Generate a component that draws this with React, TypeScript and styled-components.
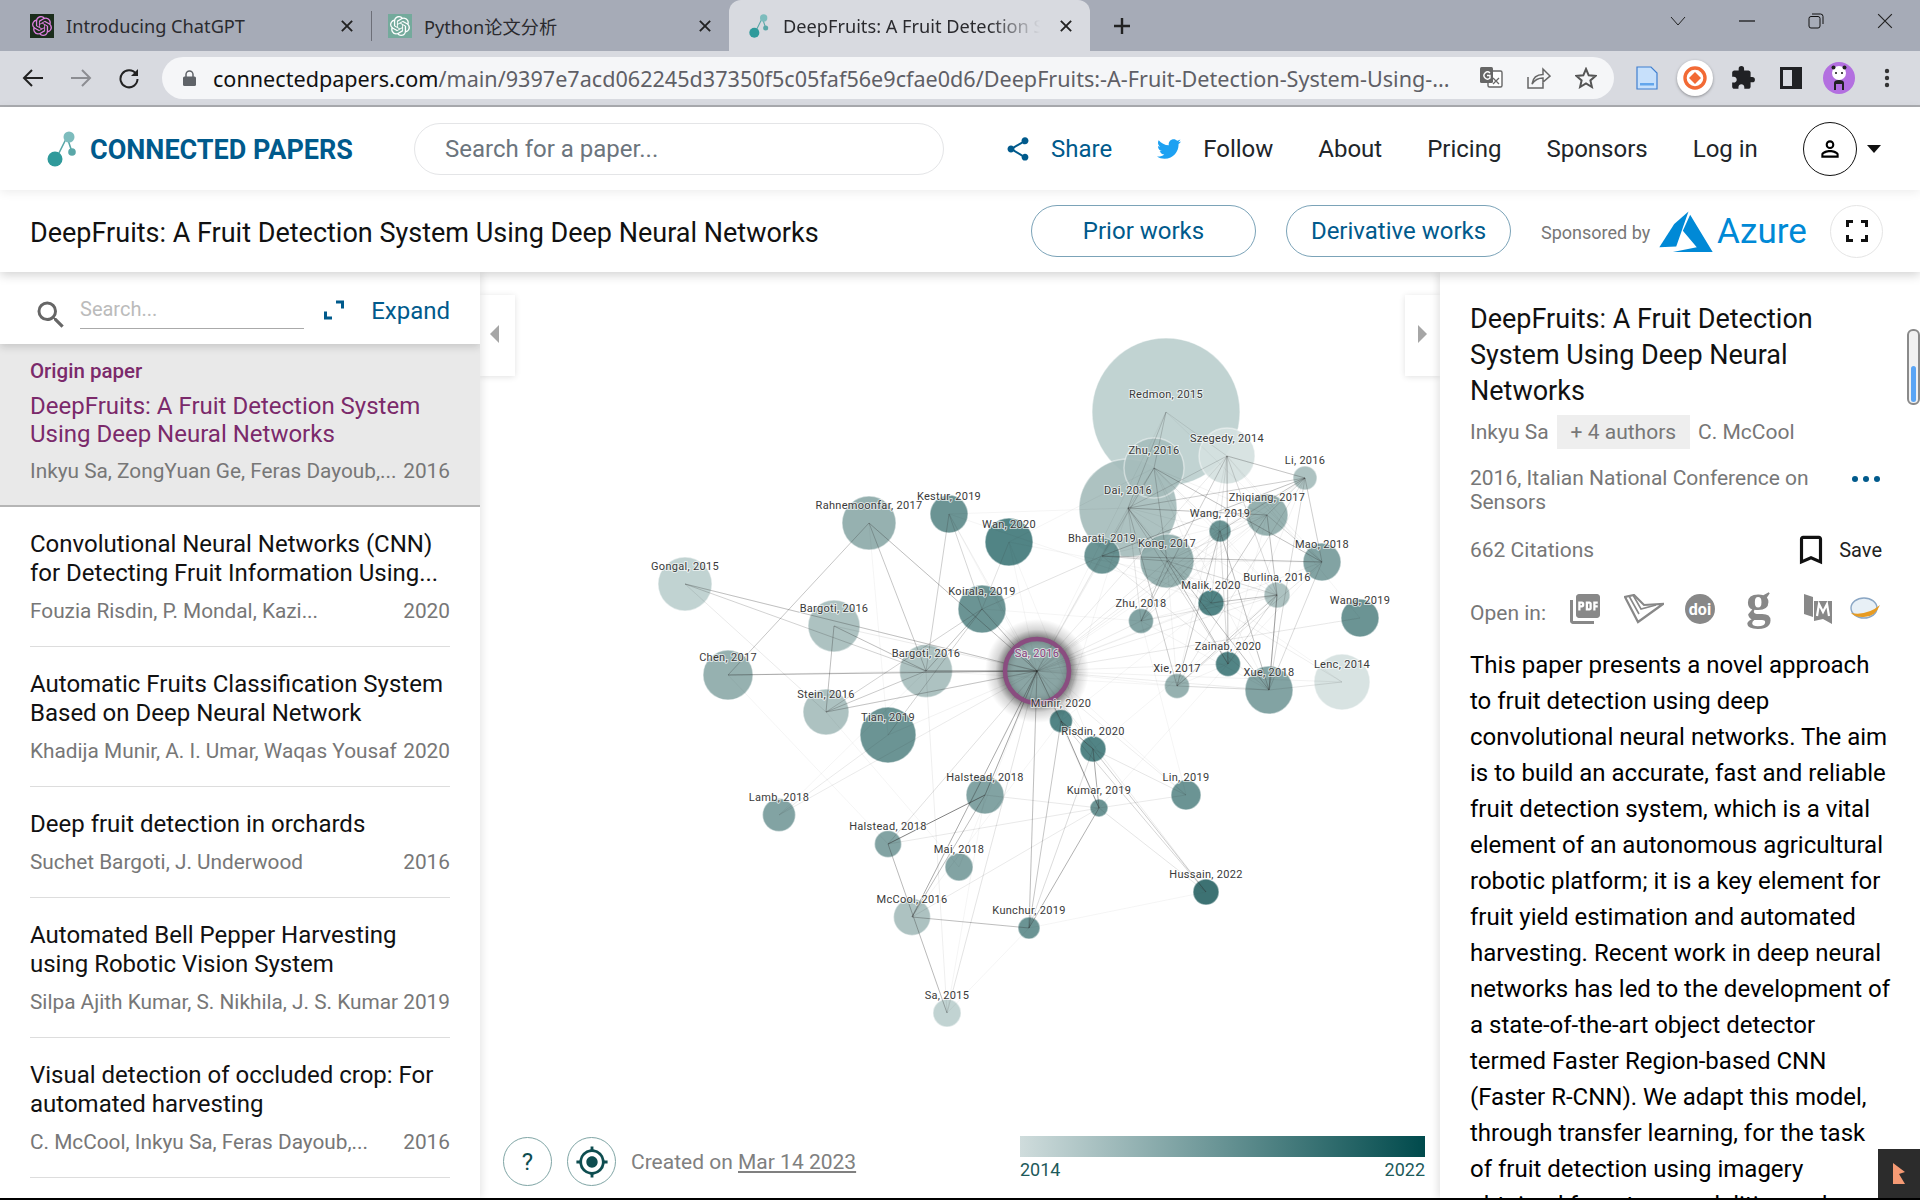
import { createGlobalStyle, styled } from 'styled-components'
import {
	MdBookmarkBorder,
	MdExtension,
	MdGpsFixed,
	MdPersonOutline,
	MdPictureAsPdf,
	MdSearch,
	MdShare,
} from 'react-icons/md'
import { FaTwitter } from 'react-icons/fa'
import { SiOpenai } from 'react-icons/si'

const GlobalStyle = createGlobalStyle`
	html, body {
		margin: 0;
		background: #000;
		font-family: Roboto, 'Liberation Sans', sans-serif;
	}
`

const YEAR_COLORS: Record<string, string> = {
	'2014': '#d5e1df',
	'2015': '#bccfce',
	'2016': '#a6bdbc',
	'2017': '#8daaa9',
	'2018': '#779b9b',
	'2019': '#5e8b8b',
	'2020': '#427a7b',
	'2022': '#2c6667',
}

type GraphNode = { id: string; label: string; x: number; y: number; r: number }

const node = (id: string, label: string, x: number, y: number, r: number): GraphNode => ({
	id,
	label,
	x,
	y,
	r,
})

const NODES: GraphNode[] = [
	node('redmon', 'Redmon, 2015', 1166, 412, 74),
	node('dai', 'Dai, 2016', 1128, 508, 49),
	node('zhu16', 'Zhu, 2016', 1154, 468, 30),
	node('szegedy', 'Szegedy, 2014', 1227, 456, 28),
	node('li', 'Li, 2016', 1305, 478, 12),
	node('zhiqiang', 'Zhiqiang, 2017', 1267, 515, 21),
	node('wangA', 'Wang, 2019', 1220, 531, 11),
	node('bharati', 'Bharati, 2019', 1102, 556, 18),
	node('kong', 'Kong, 2017', 1167, 561, 27),
	node('mao', 'Mao, 2018', 1322, 562, 19),
	node('malik', 'Malik, 2020', 1211, 603, 13),
	node('burlina', 'Burlina, 2016', 1277, 595, 13),
	node('wangB', 'Wang, 2019', 1360, 618, 19),
	node('zhu18', 'Zhu, 2018', 1141, 621, 12.5),
	node('zainab', 'Zainab, 2020', 1228, 664, 12.5),
	node('xie', 'Xie, 2017', 1177, 686, 12.5),
	node('xue', 'Xue, 2018', 1269, 690, 24),
	node('lenc', 'Lenc, 2014', 1342, 682, 28),
	node('rahne', 'Rahnemoonfar, 2017', 869, 523, 27),
	node('kestur', 'Kestur, 2019', 949, 514, 19),
	node('wan', 'Wan, 2020', 1009, 542, 24),
	node('gongal', 'Gongal, 2015', 685, 584, 27),
	node('koirala', 'Koirala, 2019', 982, 609, 24),
	node('bargotiA', 'Bargoti, 2016', 834, 626, 26),
	node('bargotiB', 'Bargoti, 2016', 926, 671, 26.5),
	node('chen', 'Chen, 2017', 728, 675, 25),
	node('stein', 'Stein, 2016', 826, 712, 23),
	node('tian', 'Tian, 2019', 888, 735, 28),
	node('munir', 'Munir, 2020', 1061, 721, 11.5),
	node('risdin', 'Risdin, 2020', 1093, 749, 13),
	node('halsteadA', 'Halstead, 2018', 985, 795, 19),
	node('lin', 'Lin, 2019', 1186, 795, 15),
	node('kumar', 'Kumar, 2019', 1099, 808, 9),
	node('lamb', 'Lamb, 2018', 779, 815, 16.5),
	node('halsteadB', 'Halstead, 2018', 888, 844, 13.5),
	node('mai', 'Mai, 2018', 959, 867, 14),
	node('hussain', 'Hussain, 2022', 1206, 892, 13),
	node('mccool', 'McCool, 2016', 912, 917, 18.5),
	node('kunchur', 'Kunchur, 2019', 1029, 928, 11),
	node('sa15', 'Sa, 2015', 947, 1013, 14),
]

const ORIGIN = { x: 1037, y: 671 }

// the edges you can actually make out in the graph
const STRONG_EDGES: [string, string, number][] = [
	['gongal', 'origin', 0.24],
	['gongal', 'bargotiB', 0.22],
	['gongal', 'stein', 0.1],
	['rahne', 'chen', 0.28],
	['rahne', 'bargotiB', 0.28],
	['rahne', 'origin', 0.24],
	['kestur', 'bargotiB', 0.24],
	['kestur', 'koirala', 0.2],
	['chen', 'origin', 0.34],
	['chen', 'bargotiB', 0.08],
	['bargotiA', 'stein', 0.32],
	['bargotiA', 'bargotiB', 0.32],
	['bargotiB', 'origin', 0.5],
	['koirala', 'bargotiB', 0.3],
	['koirala', 'stein', 0.22],
	['koirala', 'origin', 0.26],
	['stein', 'bargotiB', 0.26],
	['stein', 'origin', 0.22],
	['tian', 'koirala', 0.22],
	['wan', 'koirala', 0.14],
	['koirala', 'bharati', 0.14],
	['origin', 'halsteadA', 0.4],
	['origin', 'mccool', 0.36],
	['origin', 'munir', 0.32],
	['origin', 'kunchur', 0.24],
	['munir', 'kunchur', 0.28],
	['risdin', 'kunchur', 0.13],
	['kumar', 'kunchur', 0.38],
	['munir', 'kumar', 0.5],
	['risdin', 'kumar', 0.42],
	['munir', 'risdin', 0.5],
	['halsteadA', 'halsteadB', 0.62],
	['halsteadA', 'mccool', 0.32],
	['halsteadB', 'sa15', 0.34],
	['risdin', 'hussain', 0.24],
	['munir', 'hussain', 0.2],
	['kumar', 'hussain', 0.13],
	['kunchur', 'mccool', 0.32],
	['kumar', 'lin', 0.1],
	['kumar', 'halsteadA', 0.11],
	['kumar', 'halsteadB', 0.11],
	['kumar', 'mccool', 0.1],
	['kunchur', 'hussain', 0.05],
	['risdin', 'lin', 0.12],
	['tian', 'lamb', 0.1],
	['sa15', 'kunchur', 0.05],
	['sa15', 'bargotiB', 0.08],
	['sa15', 'origin', 0.06],
	['halsteadB', 'origin', 0.08],
	['li', 'mao', 0.24],
	['szegedy', 'li', 0.24],
	['redmon', 'dai', 0.22],
	['redmon', 'zhu16', 0.22],
	['redmon', 'szegedy', 0.12],
	['wangB', 'origin', 0.05],
	['lenc', 'malik', 0.08],
	['lenc', 'xue', 0.12],
	['burlina', 'xue', 0.24],
]

const CLUSTER = [
	'dai', 'zhu16', 'szegedy', 'li', 'zhiqiang', 'wangA', 'bharati', 'kong',
	'mao', 'malik', 'burlina', 'zhu18', 'zainab', 'xie', 'xue',
]

const position = (id: string) =>
	id === 'origin' ? ORIGIN : (NODES.find((n) => n.id === id) as GraphNode)

// fills the dense right cluster and the faint web without listing every pair
function buildEdges() {
	const edges: { a: string; b: string; o: number }[] = STRONG_EDGES.map(([a, b, o]) => ({ a, b, o }))
	CLUSTER.forEach((a, i) => {
		CLUSTER.slice(i + 1).forEach((b, j) => {
			const h = (i * 37 + j * 61 + 11) % 10
			if (h < 6) edges.push({ a, b, o: 0.06 + (h % 5) * 0.06 })
		})
	})
	NODES.forEach((n, i) => {
		edges.push({ a: n.id, b: 'origin', o: 0.05 + ((i * 13) % 5) * 0.012 })
		NODES.forEach((m, j) => {
			if (j > i && (i * 7 + j * 11) % 9 === 0) {
				const d = Math.hypot(n.x - m.x, n.y - m.y)
				if (d < 280) edges.push({ a: n.id, b: m.id, o: 0.05 })
			}
		})
	})
	return edges
}

const EDGES = buildEdges()

const PAPERS = [
	{
		title: 'Convolutional Neural Networks (CNN) for Detecting Fruit Information Using...',
		authors: 'Fouzia Risdin, P. Mondal, Kazi...',
		year: 2020,
	},
	{
		title: 'Automatic Fruits Classification System Based on Deep Neural Network',
		authors: 'Khadija Munir, A. I. Umar, Waqas Yousaf',
		year: 2020,
	},
	{
		title: 'Deep fruit detection in orchards',
		authors: 'Suchet Bargoti, J. Underwood',
		year: 2016,
	},
	{
		title: 'Automated Bell Pepper Harvesting using Robotic Vision System',
		authors: 'Silpa Ajith Kumar, S. Nikhila, J. S. Kumar',
		year: 2019,
	},
	{
		title: 'Visual detection of occluded crop: For automated harvesting',
		authors: 'C. McCool, Inkyu Sa, Feras Dayoub,...',
		year: 2016,
	},
]

const ABSTRACT_HEAD =
	'This paper presents a novel approach to fruit detection using deep convolutional neural networks. The aim is to build an accurate, fast and reliable fruit detection system, which is a vital element of an autonomous agricultural robotic platform; it is a key element for fruit yield estimation and automated harvesting. Recent work in deep neural networks has led to the development of a state-of-the-art object detector termed Faster Region-based CNN (Faster R-CNN). We adapt this model, through transfer learning, for the task'
const ABSTRACT_TAIL =
	'of fruit detection using imagery obtained from two modalities: colour (RGB) and Near-Infrared (NIR).'

function LogoMark({ size }: { size: number }) {
	return (
		<svg width={size} height={size * 1.2} viewBox="0 0 30 36">
			<path d="M9 28 L20 6 L25 21" stroke="#5aa7a8" strokeWidth="1.6" fill="none" />
			<circle cx="22" cy="6" r="5.5" fill="#7dbcbd" />
			<circle cx="25" cy="21" r="3.8" fill="#5aa7a8" />
			<circle cx="8" cy="28" r="7.5" fill="#2f9a9b" />
		</svg>
	)
}

function CloseGlyph({ size = 14, color = '#222', width = 2 }: { size?: number; color?: string; width?: number }) {
	return (
		<svg width={size} height={size} viewBox="0 0 14 14">
			<path d="M1 1 L13 13 M13 1 L1 13" stroke={color} strokeWidth={width} fill="none" />
		</svg>
	)
}

function Graph() {
	return (
		<GraphSvg viewBox="480 272 960 926">
			<defs>
				<radialGradient id="originFill">
					<stop offset="0%" stopColor="#8aa5a4" stopOpacity="0" />
					<stop offset="65%" stopColor="#8aa5a4" stopOpacity="0" />
					<stop offset="100%" stopColor="#4a4f4f" stopOpacity="0.45" />
				</radialGradient>
				<radialGradient id="originGlow">
					<stop offset="62%" stopColor="#000" stopOpacity="0.55" />
					<stop offset="80%" stopColor="#000" stopOpacity="0.16" />
					<stop offset="100%" stopColor="#000" stopOpacity="0" />
				</radialGradient>
			</defs>
			{NODES.map((n) => (
				<circle
					key={n.id + n.x}
					cx={n.x}
					cy={n.y}
					r={n.r}
					fill={YEAR_COLORS[n.label.slice(-4)]}
					fillOpacity={0.92}
					stroke="#fff"
					strokeOpacity={0.45}
					strokeWidth={1.5}
				/>
			))}
			<circle cx={ORIGIN.x} cy={ORIGIN.y} r={52} fill="url(#originGlow)" />
			<circle cx={ORIGIN.x} cy={ORIGIN.y} r={32} fill="#8aa5a4" />
			{EDGES.map((e, i) => {
				const a = position(e.a)
				const b = position(e.b)
				return <line key={i} x1={a.x} y1={a.y} x2={b.x} y2={b.y} stroke="#333" strokeOpacity={e.o} strokeWidth={1} />
			})}
			<circle cx={ORIGIN.x} cy={ORIGIN.y} r={32} fill="url(#originFill)" stroke="#8a4d80" strokeWidth={4.5} />
			{NODES.map((n) => (
				<NodeLabel key={n.id + 'label'} x={n.x} y={n.y - 14}>
					{n.label}
				</NodeLabel>
			))}
			<NodeLabel x={ORIGIN.x} y={ORIGIN.y - 14} $origin>
				Sa, 2016
			</NodeLabel>
		</GraphSvg>
	)
}

export default function App() {
	return (
		<>
			<GlobalStyle />
			<Page>
				<TabStrip>
					<Tab>
						<Favicon $bg="#1b2d1c" $fg="#de80e0">
							<SiOpenai size={20} />
						</Favicon>
						<TabTitle>Introducing ChatGPT</TabTitle>
						<CloseGlyph size={12} width={2.2} />
					</Tab>
					<TabDivider />
					<Tab>
						<Favicon $bg="#74aa9c" $fg="#fff">
							<SiOpenai size={20} />
						</Favicon>
						<TabTitle>Python论文分析</TabTitle>
						<CloseGlyph size={12} width={2.2} />
					</Tab>
					<ActiveTab>
						<LogoMark size={20} />
						<TabTitle $active>DeepFruits: A Fruit Detection System Using Deep Neural Networks</TabTitle>
						<CloseGlyph size={12} width={2.2} />
					</ActiveTab>
					<NewTab>
						<svg width="20" height="20" viewBox="0 0 20 20">
							<path d="M10 2 V18 M2 10 H18" stroke="#222" strokeWidth="2.4" />
						</svg>
					</NewTab>
					<WindowControls>
						<svg width="16" height="10" viewBox="0 0 16 10">
							<path d="M1 1 L8 9 L15 1" stroke="#222" fill="none" />
						</svg>
						<svg width="16" height="2" viewBox="0 0 16 2">
							<path d="M0 1 H16" stroke="#111" strokeWidth="1.2" />
						</svg>
						<svg width="16" height="16" viewBox="0 0 16 16">
							<rect x="1" y="3.5" width="11" height="11.5" rx="2" stroke="#111" fill="none" />
							<path d="M4 1 H12.5 Q15 1 15 3.5 V11" stroke="#111" fill="none" />
						</svg>
						<CloseGlyph size={16} width={1} />
					</WindowControls>
				</TabStrip>
				<Toolbar>
					<NavIcons>
						<svg width="22" height="20" viewBox="0 0 22 20">
							<path d="M21 10 H2 M10 2 L2 10 L10 18" stroke="#222" strokeWidth="2" fill="none" />
						</svg>
						<svg width="22" height="20" viewBox="0 0 22 20">
							<path d="M1 10 H20 M12 2 L20 10 L12 18" stroke="#8c8d92" strokeWidth="2" fill="none" />
						</svg>
						<svg width="22" height="22" viewBox="0 0 22 22">
							<path d="M18 7 A8.5 8.5 0 1 0 19.5 12" stroke="#222" strokeWidth="2" fill="none" />
							<path d="M20 2 V9 H13 Z" fill="#222" />
						</svg>
					</NavIcons>
					<AddressBar>
						<svg width="13" height="16" viewBox="0 0 13 16">
							<path d="M3 7 V4.5 A3.5 3.5 0 0 1 10 4.5 V7" stroke="#5f6368" strokeWidth="1.5" fill="none" />
							<rect y="6.5" width="13" height="9.5" rx="1.5" fill="#5f6368" />
						</svg>
						<Url>
							connectedpapers.com
							<UrlPath>/main/9397e7acd062245d37350f5c05faf56e9cfae0d6/DeepFruits:-A-Fruit-Detection-System-Using-...</UrlPath>
						</Url>
						<AddressActions>
							<svg width="24" height="24" viewBox="0 0 24 24">
								<rect x="9" y="5" width="14" height="16" rx="1.5" fill="#fff" stroke="#666" strokeWidth="1.4" />
								<rect x="1" y="1" width="13" height="16" rx="1.5" fill="#666" />
								<path d="M11 7 A3.5 3.5 0 1 0 11 12 V9.5 H8" stroke="#fff" strokeWidth="1.4" fill="none" />
								<path d="M14 12 L20 18 M20 12 L14 18" stroke="#666" strokeWidth="1.3" />
							</svg>
							<svg width="24" height="22" viewBox="0 0 24 22">
								<path d="M1 10 V21 H16 V16" stroke="#666" strokeWidth="1.5" fill="none" />
								<path d="M5 17 C6 10 10 7.5 16 7.5 V2 L23 9 L16 15 V11 C11 11 8 12.5 5 17 Z" stroke="#666" strokeWidth="1.5" fill="none" />
							</svg>
							<svg width="22" height="22" viewBox="0 0 22 22">
								<path d="M11 2 L13.7 8.3 L20.5 8.9 L15.4 13.4 L16.9 20 L11 16.5 L5.1 20 L6.6 13.4 L1.5 8.9 L8.3 8.3 Z" stroke="#555" strokeWidth="2" fill="none" />
							</svg>
						</AddressActions>
					</AddressBar>
					<Extensions>
						<svg width="22" height="24" viewBox="0 0 22 24">
							<path d="M1 1 H15 L21 7 V23 H1 Z" fill="#c7e0fb" stroke="#3f7fd0" strokeWidth="1.2" />
							<rect x="4" y="17" width="14" height="2.5" fill="#63a6ec" />
						</svg>
						<OrangeBadge>
							<svg width="24" height="24" viewBox="0 0 24 24">
								<circle cx="12" cy="12" r="10" stroke="#f26a35" strokeWidth="3.4" fill="#fff" />
								<path d="M12 6 L18 12 L12 18 L6 12 Z" fill="#f26a35" />
							</svg>
						</OrangeBadge>
						<MdExtension size={26} color="#202124" />
						<svg width="22" height="22" viewBox="0 0 22 22">
							<rect x="1.5" y="1.5" width="19" height="19" fill="none" stroke="#202124" strokeWidth="3" />
							<rect x="12" y="2" width="8" height="18" fill="#202124" />
						</svg>
						<Avatar>
							<svg width="20" height="26" viewBox="0 0 20 26">
								<circle cx="10" cy="8" r="7" fill="#fff" />
								<circle cx="4.5" cy="2.5" r="2" fill="#222" />
								<circle cx="15.5" cy="2.5" r="2" fill="#222" />
								<circle cx="7" cy="8" r="1.1" fill="#222" />
								<circle cx="13" cy="8" r="1.1" fill="#222" />
								<path d="M5 25 V18 Q5 15 10 15 Q15 15 15 18 V25 H13 V19 H7 V25 Z" fill="#222" />
							</svg>
						</Avatar>
						<svg width="6" height="20" viewBox="0 0 6 20">
							<circle cx="3" cy="3" r="2.2" fill="#333" />
							<circle cx="3" cy="10" r="2.2" fill="#333" />
							<circle cx="3" cy="17" r="2.2" fill="#333" />
						</svg>
					</Extensions>
				</Toolbar>

				<SiteHeader>
					<Brand>
						<LogoMark size={30} />
						<BrandName>CONNECTED PAPERS</BrandName>
					</Brand>
					<SearchBox>Search for a paper...</SearchBox>
					<NavLinks>
						<NavItem $accent $gap={19}>
							<MdShare size={28} />
							Share
						</NavItem>
						<NavItem $gap={22}>
							<FaTwitter size={24} color="#1da1f2" />
							Follow
						</NavItem>
						<NavItem>About</NavItem>
						<NavItem>Pricing</NavItem>
						<NavItem>Sponsors</NavItem>
						<NavItem>Log in</NavItem>
					</NavLinks>
					<UserCircle>
						<MdPersonOutline size={26} />
					</UserCircle>
					<Caret />
				</SiteHeader>

				<SubHeader>
					<GraphTitle>DeepFruits: A Fruit Detection System Using Deep Neural Networks</GraphTitle>
					<PillButton>Prior works</PillButton>
					<PillButton>Derivative works</PillButton>
					<Sponsor>
						<SponsorLabel>Sponsored by</SponsorLabel>
						<svg width="58" height="45" viewBox="410 55 175 135">
							<path d="M505 62 L462 100 L417 170 L468 168 Z" fill="#0089d6" />
							<path d="M510 72 L488 120 L530 170 L458 184 L578 184 Z" fill="#0089d6" />
						</svg>
						<AzureWord>Azure</AzureWord>
					</Sponsor>
					<FullscreenButton>
						<svg width="22" height="22" viewBox="0 0 22 22">
							<path d="M1.5 7 V1.5 H7 M15 1.5 H20.5 V7 M20.5 15 V20.5 H15 M7 20.5 H1.5 V15" stroke="#111" strokeWidth="3" fill="none" />
						</svg>
					</FullscreenButton>
				</SubHeader>

				<Workspace>
					<LeftPane>
						<ListSearch>
							<MdSearch size={36} color="#666" />
							<ListInput>Search...</ListInput>
							<svg width="20" height="20" viewBox="0 0 20 20">
								<path d="M12 2 H18.5 V8.5 M1.5 11.5 V18 H8" stroke="#005a8c" strokeWidth="3" fill="none" />
							</svg>
							<ExpandLabel>Expand</ExpandLabel>
						</ListSearch>
						<OriginCard>
							<OriginTag>Origin paper</OriginTag>
							<OriginTitle>DeepFruits: A Fruit Detection System Using Deep Neural Networks</OriginTitle>
							<PaperMeta>
								<span>Inkyu Sa, ZongYuan Ge, Feras Dayoub,...</span>
								<span>2016</span>
							</PaperMeta>
						</OriginCard>
						{PAPERS.map((p) => (
							<PaperRow key={p.title}>
								<PaperTitle>{p.title}</PaperTitle>
								<PaperMeta>
									<span>{p.authors}</span>
									<span>{p.year}</span>
								</PaperMeta>
							</PaperRow>
						))}
					</LeftPane>

					<GraphPane>
						<Graph />
						<CollapseTab $side="left">
							<Triangle $side="left" />
						</CollapseTab>
						<CollapseTab $side="right">
							<Triangle $side="right" />
						</CollapseTab>
						<GraphFooter>
							<RoundTool>?</RoundTool>
							<RoundTool>
								<MdGpsFixed size={34} />
							</RoundTool>
							<CreatedOn>
								Created on <u>Mar 14 2023</u>
							</CreatedOn>
						</GraphFooter>
						<Legend>
							<LegendBar />
							<LegendYears>
								<span>2014</span>
								<span>2022</span>
							</LegendYears>
						</Legend>
					</GraphPane>

					<RightPane>
						<DetailTitle>DeepFruits: A Fruit Detection System Using Deep Neural Networks</DetailTitle>
						<AuthorRow>
							<span>Inkyu Sa</span>
							<MoreAuthors>+ 4 authors</MoreAuthors>
							<span>C. McCool</span>
						</AuthorRow>
						<VenueRow>
							<Venue>2016, Italian National Conference on Sensors</Venue>
							<Dots>
								<i />
								<i />
								<i />
							</Dots>
						</VenueRow>
						<CitationRow>
							<span>662 Citations</span>
							<SaveButton>
								<MdBookmarkBorder size={38} color="#111" />
								Save
							</SaveButton>
						</CitationRow>
						<OpenRow>
							<OpenLabel>Open in:</OpenLabel>
							<MdPictureAsPdf size={36} color="#888" />
							<svg width="40" height="30" viewBox="0 0 40 30">
								<path d="M1 3 L14 28 L39 10 L20 11 L10 1 Z" fill="none" stroke="#888" strokeWidth="2.2" />
								<path d="M5 2 L15 20 M9 1 L17 15 L32 11" stroke="#888" strokeWidth="1.6" fill="none" />
							</svg>
							<DoiBadge>doi</DoiBadge>
							<ScholarG>g</ScholarG>
							<svg width="30" height="32" viewBox="0 0 30 32">
								<path d="M1 1 L10 4 V24 L1 21 Z" fill="#888" />
								<path d="M11 8 H29 V31 L20 26 L11 28 Z" fill="#888" />
								<path d="M14 23 L16 11 L20 19 L24 11 L26 23" stroke="#fff" strokeWidth="2.2" fill="none" />
							</svg>
							<LastIcon>
								<svg width="32" height="26" viewBox="0 0 32 26">
									<ellipse cx="15" cy="12" rx="13" ry="10" fill="#e8f0f6" stroke="#8aa6c4" strokeWidth="1.4" />
									<path d="M2 17 Q18 20 31 9 Q26 22 13 21 Q6 21 2 17 Z" fill="#e79b22" />
								</svg>
							</LastIcon>
						</OpenRow>
						<AbstractText>
							{ABSTRACT_HEAD}
							<br />
							{ABSTRACT_TAIL}
						</AbstractText>
						<ScrollTrack>
							<ScrollThumb />
						</ScrollTrack>
					</RightPane>
				</Workspace>
				<FeedbackWidget>
					<svg width="14" height="24" viewBox="0 0 14 24">
						<path d="M1 1 L13 10 L7 12 L13 22 L1 22 Z" fill="#f59a74" />
					</svg>
				</FeedbackWidget>
			</Page>
		</>
	)
}

const Page = styled.div`
	position: relative;
	width: 1920px;
	height: 1198px;
	overflow: hidden;
	background: #fff;
	display: flex;
	flex-direction: column;
`

const TabStrip = styled.div`
	height: 51px;
	background: #a6abb7;
	display: flex;
	align-items: center;
	padding-left: 14px;
	flex-shrink: 0;
`
const Tab = styled.div`
	width: 357px;
	height: 51px;
	box-sizing: border-box;
	padding: 0 18px 0 16px;
	display: flex;
	align-items: center;
	gap: 12px;
`
const TabDivider = styled.div`
	width: 1px;
	height: 30px;
	background: #6d6f78;
`
const ActiveTab = styled(Tab)`
	width: 361px;
	background: #d8dae0;
	border-radius: 12px 12px 0 0;
	padding: 0 18px 0 20px;
`
const Favicon = styled.div<{ $bg: string; $fg: string }>`
	width: 24px;
	height: 24px;
	flex-shrink: 0;
	display: flex;
	align-items: center;
	justify-content: center;
	background: ${(p) => p.$bg};
	color: ${(p) => p.$fg};
`
const TabTitle = styled.div<{ $active?: boolean }>`
	flex: 1;
	font-family: 'Noto Sans', 'Noto Sans CJK SC', sans-serif;
	font-size: 18.2px;
	color: #2a2a2e;
	white-space: nowrap;
	overflow: hidden;
	${(p) =>
		p.$active &&
		`
		margin-left: 2px;
		-webkit-mask-image: linear-gradient(to right, #000 78%, transparent 97%);
		mask-image: linear-gradient(to right, #000 78%, transparent 97%);
	`}
`
const NewTab = styled.div`
	width: 64px;
	display: flex;
	justify-content: center;
`
const WindowControls = styled.div`
	margin-left: auto;
	width: 396px;
	padding-right: 27px;
	box-sizing: border-box;
	display: flex;
	align-items: center;
	justify-content: flex-end;
	gap: 53px;
	margin-top: -9px;
`

const Toolbar = styled.div`
	background: #d8dae0;
	border-bottom: 2px solid #aaacb0;
	display: flex;
	align-items: flex-start;
	flex-shrink: 0;
	height: 54px;
`
const NavIcons = styled.div`
	width: 162px;
	height: 54px;
	box-sizing: border-box;
	padding: 0 22px;
	display: flex;
	align-items: center;
	justify-content: space-between;
`
const AddressBar = styled.div`
	margin-top: 6px;
	width: 1452px;
	height: 42px;
	border-radius: 21px;
	background: #f5f6f8;
	display: flex;
	align-items: center;
	padding-left: 21px;
	box-sizing: border-box;
	flex-shrink: 0;
`
const Url = styled.div`
	margin-left: 17px;
	font-family: 'Noto Sans', sans-serif;
	font-size: 21.6px;
	color: #111;
	white-space: nowrap;
	width: 1266px;
	flex-shrink: 0;
`
const UrlPath = styled.span`
	color: #5f5f66;
`
const AddressActions = styled.div`
	display: flex;
	align-items: center;
	gap: 24px;
`
const Extensions = styled.div`
	height: 54px;
	display: grid;
	grid-auto-flow: column;
	grid-auto-columns: 48px;
	align-items: center;
	justify-items: center;
	padding-left: 9px;
`
const OrangeBadge = styled.div`
	width: 36px;
	height: 36px;
	border-radius: 50%;
	background: #fff;
	box-shadow: 0 1px 3px rgba(0, 0, 0, 0.35);
	display: flex;
	align-items: center;
	justify-content: center;
`
const Avatar = styled.div`
	width: 32px;
	height: 32px;
	border-radius: 50%;
	background: #b36fe0;
	display: flex;
	align-items: center;
	justify-content: center;
	overflow: hidden;
`

const SiteHeader = styled.header`
	position: relative;
	z-index: 3;
	height: 83px;
	flex-shrink: 0;
	background: #fff;
	box-shadow: 0 2px 10px rgba(0, 0, 0, 0.08);
	display: flex;
	align-items: center;
	padding-left: 47px;
`
const Brand = styled.div`
	display: flex;
	align-items: center;
	gap: 13px;
	width: 367px;
`
const BrandName = styled.div`
	padding-top: 2px;
	font-size: 27px;
	font-weight: 700;
	color: #005a8c;
	white-space: nowrap;
`
const SearchBox = styled.div`
	width: 530px;
	height: 52px;
	box-sizing: border-box;
	border: 1px solid #e4e5e7;
	border-radius: 26px;
	padding: 1px 0 0 30px;
	display: flex;
	align-items: center;
	font-size: 24px;
	color: #6c757d;
`
const NavLinks = styled.nav`
	display: flex;
	align-items: center;
	gap: 45px;
	margin-left: 60px;
`
const NavItem = styled.div<{ $accent?: boolean; $gap?: number }>`
	display: flex;
	align-items: center;
	gap: ${(p) => p.$gap ?? 0}px;
	font-size: 24px;
	color: ${(p) => (p.$accent ? '#005a8c' : '#212529')};
`
const UserCircle = styled.div`
	margin-left: 45px;
	width: 54px;
	height: 54px;
	box-sizing: border-box;
	border: 1.5px solid #111;
	border-radius: 50%;
	display: flex;
	align-items: center;
	justify-content: center;
`
const Caret = styled.div`
	margin-left: 10px;
	border-left: 7px solid transparent;
	border-right: 7px solid transparent;
	border-top: 8px solid #111;
`

const SubHeader = styled.div`
	position: relative;
	z-index: 2;
	height: 82px;
	flex-shrink: 0;
	background: #fff;
	box-shadow: 0 3px 10px rgba(0, 0, 0, 0.18);
	display: flex;
	align-items: center;
	padding-left: 30px;
`
const GraphTitle = styled.div`
	width: 1001px;
	padding-top: 4px;
	font-size: 27px;
	color: #111;
	white-space: nowrap;
`
const PillButton = styled.div`
	width: 225px;
	height: 52px;
	box-sizing: border-box;
	margin-right: 30px;
	border: 1px solid #7ba3b8;
	border-radius: 26px;
	display: flex;
	align-items: center;
	justify-content: center;
	font-size: 24px;
	color: #005a8c;
`
const Sponsor = styled.div`
	display: flex;
	align-items: center;
	width: 289px;
`
const SponsorLabel = styled.div`
	font-size: 18px;
	padding-top: 2px;
	color: #777;
	width: 116px;
	white-space: nowrap;
`
const AzureWord = styled.div`
	font-size: 35px;
	color: #0089d6;
	margin-left: 2px;
`
const FullscreenButton = styled.div`
	width: 53px;
	height: 53px;
	box-sizing: border-box;
	border: 1px solid #e5e5e5;
	border-radius: 50%;
	display: flex;
	align-items: center;
	justify-content: center;
`

const Workspace = styled.div`
	flex: 1;
	min-height: 0;
	display: flex;
`
const LeftPane = styled.aside`
	position: relative;
	z-index: 1;
	width: 480px;
	flex-shrink: 0;
	overflow: hidden;
	box-shadow: 2px 0 8px rgba(0, 0, 0, 0.1);
	background: #fff;
`
const ListSearch = styled.div`
	position: relative;
	z-index: 1;
	height: 72px;
	box-sizing: border-box;
	padding: 4px 30px 0 33px;
	display: flex;
	align-items: center;
	background: #fff;
	box-shadow: 0 3px 8px rgba(0, 0, 0, 0.15);
	& > svg:first-child {
		margin-top: 10px;
		flex-shrink: 0;
	}
`
const ListInput = styled.div`
	width: 224px;
	height: 37px;
	margin: 0 20px 0 11px;
	box-sizing: border-box;
	border-bottom: 1px solid #aaa;
	font-size: 20px;
	line-height: 34px;
	color: #bbb;
	flex-shrink: 0;
`
const ExpandLabel = styled.div`
	margin: 2px 0 0 auto;
	font-size: 24px;
	color: #005a8c;
`
const OriginCard = styled.div`
	background: #e9e9e9;
	border-bottom: 2px solid #b5b5b5;
	padding: 15px 30px 0;
	height: 163px;
	box-sizing: border-box;
	& > div:last-child {
		margin-top: 11px;
	}
`
const OriginTag = styled.div`
	font-size: 20.5px;
	font-weight: 500;
	line-height: 24px;
	color: #7b2a6b;
`
const OriginTitle = styled.div`
	margin-top: 9px;
	font-size: 24px;
	line-height: 28px;
	color: #7b2a6b;
`
const PaperRow = styled.div`
	margin: 0 30px;
	padding: 23px 0 23.4px;
	border-bottom: 1px solid #ddd;
`
const PaperTitle = styled.div`
	font-size: 24px;
	line-height: 28.8px;
	color: #111;
`
const PaperMeta = styled.div`
	margin-top: 11px;
	display: flex;
	justify-content: space-between;
	font-size: 20.8px;
	line-height: 24px;
	color: #777;
	white-space: nowrap;
`

const GraphPane = styled.main`
	position: relative;
	flex: 1;
	min-width: 0;
`
const GraphSvg = styled.svg`
	display: block;
	width: 100%;
	height: 100%;
`
const NodeLabel = styled.text<{ $origin?: boolean }>`
	font-family: Roboto, sans-serif;
	font-size: 11px;
	letter-spacing: 0.3px;
	text-anchor: middle;
	fill: ${(p) => (p.$origin ? '#8a3f7c' : '#3a3a3a')};
	stroke: #fff;
	stroke-width: 2px;
	stroke-opacity: 0.65;
	paint-order: stroke;
`
const CollapseTab = styled.div<{ $side: 'left' | 'right' }>`
	position: absolute;
	top: 23px;
	${(p) => p.$side}: 0;
	width: 35px;
	height: 81px;
	background: #fff;
	box-shadow: 0 1px 6px rgba(0, 0, 0, 0.12);
	display: flex;
	align-items: flex-start;
	justify-content: center;
	padding: 30px ${(p) => (p.$side === 'left' ? '6px' : '0')} 0 0;
	box-sizing: border-box;
`
const Triangle = styled.div<{ $side: 'left' | 'right' }>`
	border-top: 9px solid transparent;
	border-bottom: 9px solid transparent;
	${(p) => (p.$side === 'left' ? 'border-right' : 'border-left')}: 9px solid #a6a6a6;
`
const GraphFooter = styled.div`
	position: absolute;
	left: 23px;
	bottom: 12px;
	display: flex;
	align-items: center;
	gap: 15px;
`
const RoundTool = styled.div`
	width: 49px;
	height: 49px;
	box-sizing: border-box;
	border: 1px solid #7fa5a5;
	border-radius: 50%;
	display: flex;
	align-items: center;
	justify-content: center;
	font-size: 24px;
	color: #0e4d50;
	background: #fff;
`
const CreatedOn = styled.div`
	font-size: 21px;
	color: #808080;
`
const Legend = styled.div`
	position: absolute;
	left: 540px;
	bottom: 18px;
	width: 405px;
`
const LegendBar = styled.div`
	height: 21px;
	background: linear-gradient(to right, #cfdcdc, #004a4c);
`
const LegendYears = styled.div`
	margin-top: 3px;
	display: flex;
	justify-content: space-between;
	font-size: 18px;
	line-height: 20px;
	color: #1d5a5a;
`

const RightPane = styled.aside`
	position: relative;
	width: 480px;
	flex-shrink: 0;
	box-sizing: border-box;
	padding: 29px 30px 0 30px;
	overflow: hidden;
	background: #fff;
	box-shadow: -2px 0 8px rgba(0, 0, 0, 0.12);
`
const DetailTitle = styled.h1`
	margin: 0;
	font-size: 27px;
	font-weight: 400;
	line-height: 36px;
	color: #111;
	width: 380px;
`
const AuthorRow = styled.div`
	margin-top: 6px;
	height: 34px;
	display: flex;
	align-items: center;
	gap: 8px;
	font-size: 21px;
	color: #777;
`
const MoreAuthors = styled.div`
	background: #eee;
	height: 34px;
	padding: 0 14px;
	display: flex;
	align-items: center;
`
const VenueRow = styled.div`
	margin-top: 17px;
	display: flex;
	justify-content: space-between;
	align-items: flex-start;
	color: #777;
	font-size: 21px;
	line-height: 24px;
`
const Venue = styled.div`
	width: 360px;
`
const Dots = styled.div`
	display: flex;
	gap: 5px;
	padding: 10px 10px 0 0;
	i {
		width: 6px;
		height: 6px;
		border-radius: 50%;
		background: #005a8c;
	}
`
const CitationRow = styled.div`
	margin-top: 17px;
	display: flex;
	justify-content: space-between;
	align-items: center;
	font-size: 21px;
	color: #777;
`
const SaveButton = styled.div`
	display: flex;
	align-items: center;
	gap: 9px;
	font-size: 20px;
	color: #222;
	padding-right: 8px;
`
const OpenRow = styled.div`
	margin-top: 22px;
	display: flex;
	align-items: center;
	gap: 21px;
`
const OpenLabel = styled.div`
	margin: 4px 0 -4px;
	font-size: 21px;
	color: #777;
	width: 76px;
	white-space: nowrap;
`
const DoiBadge = styled.div`
	width: 30px;
	height: 30px;
	border-radius: 50%;
	background: #888;
	color: #fff;
	font-size: 16px;
	font-weight: 700;
	display: flex;
	align-items: center;
	justify-content: center;
`
const ScholarG = styled.div`
	font-family: 'Liberation Serif', serif;
	font-size: 50px;
	font-weight: 700;
	line-height: 30px;
	color: #888;
	margin-top: -16px;
	padding: 0 11px 0 10px;
`
const LastIcon = styled.div`
	margin-left: -5px;
	display: flex;
`
const AbstractText = styled.p`
	margin: 20px -4px 0 0;
	font-size: 24px;
	line-height: 36px;
	color: #000;
`
const ScrollTrack = styled.div`
	position: absolute;
	top: 57px;
	right: 0;
	width: 13px;
	height: 76px;
	box-sizing: border-box;
	border: 2px solid #8a8a8a;
	border-radius: 6px;
	background: #f1f1f1;
`
const ScrollThumb = styled.div`
	margin: 35px 0 0 2px;
	width: 5px;
	height: 36px;
	border-radius: 3px;
	background: #5aa5f5;
`
const FeedbackWidget = styled.div`
	position: absolute;
	right: 0;
	bottom: 0;
	z-index: 5;
	width: 42px;
	height: 49px;
	background: #2c2c2c;
	display: flex;
	align-items: center;
	justify-content: center;
`
